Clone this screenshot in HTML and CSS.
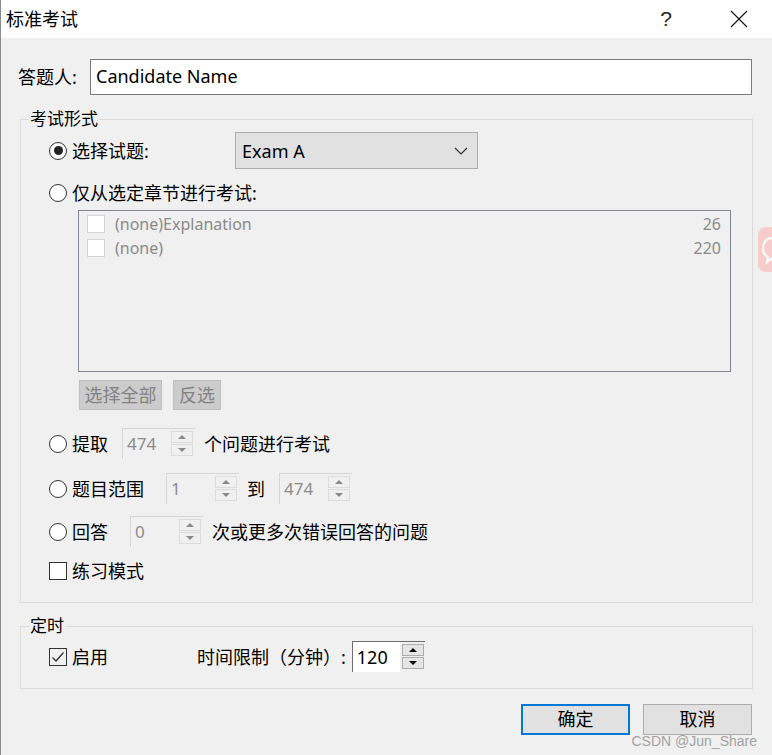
FILE: index.html
```html
<!DOCTYPE html>
<html lang="zh-CN">
<head>
<meta charset="utf-8">
<title>标准考试</title>
<link rel="stylesheet" href="styles.css">
</head>
<body>
<div class="window">
  <div class="titlebar">
    <span class="title">标准考试</span>
    <span class="tb-help">?</span>
    <span class="tb-close">
      <svg width="18" height="18" viewBox="0 0 18 18"><path d="M1 1 L17 17 M17 1 L1 17" stroke="#111" stroke-width="1.1" fill="none"/></svg>
    </span>
  </div>

  <div class="content">
    <div class="name-row">
      <span class="name-label">答题人:</span>
      <div class="textbox">Candidate Name</div>
    </div>

    <fieldset class="group g1">
      <legend>考试形式</legend>
      <div class="g-body">
        <div class="row r1">
          <span class="radio checked"></span>
          <span class="lbl w-select">选择试题:</span>
          <div class="combo">
            <span>Exam A</span>
            <svg class="chev" width="14" height="8" viewBox="0 0 14 8"><path d="M1 1 L7 7 L13 1" stroke="#333" stroke-width="1.2" fill="none"/></svg>
          </div>
        </div>

        <div class="row r2">
          <span class="radio"></span>
          <span class="lbl">仅从选定章节进行考试:</span>
        </div>

        <div class="list">
          <div class="list-item">
            <span class="lcheck"></span>
            <span class="ltext">(none)Explanation</span>
            <span class="lcount">26</span>
          </div>
          <div class="list-item">
            <span class="lcheck"></span>
            <span class="ltext">(none)</span>
            <span class="lcount">220</span>
          </div>
        </div>

        <div class="list-btns">
          <span class="dbtn w-all">选择全部</span>
          <span class="dbtn w-inv">反选</span>
        </div>

        <div class="row r-take">
          <span class="radio"></span>
          <span class="lbl w-take">提取</span>
          <div class="spin disabled">
            <span class="spin-field">474</span>
            <span class="spin-btns"><span class="sb"><i class="up"></i></span><span class="sb"><i class="dn"></i></span></span>
          </div>
          <span class="after">个问题进行考试</span>
        </div>

        <div class="row r-range">
          <span class="radio"></span>
          <span class="lbl w-range">题目范围</span>
          <div class="spin disabled">
            <span class="spin-field">1</span>
            <span class="spin-btns"><span class="sb"><i class="up"></i></span><span class="sb"><i class="dn"></i></span></span>
          </div>
          <span class="to">到</span>
          <div class="spin disabled">
            <span class="spin-field">474</span>
            <span class="spin-btns"><span class="sb"><i class="up"></i></span><span class="sb"><i class="dn"></i></span></span>
          </div>
        </div>

        <div class="row r-ans">
          <span class="radio"></span>
          <span class="lbl w-ans">回答</span>
          <div class="spin disabled">
            <span class="spin-field">0</span>
            <span class="spin-btns"><span class="sb"><i class="up"></i></span><span class="sb"><i class="dn"></i></span></span>
          </div>
          <span class="after">次或更多次错误回答的问题</span>
        </div>

        <div class="row r-practice">
          <span class="check"></span>
          <span class="lbl">练习模式</span>
        </div>
      </div>
    </fieldset>

    <fieldset class="group g2">
      <legend>定时</legend>
      <div class="g-body">
        <div class="row r-timer">
          <span class="check checked">
            <svg width="16" height="16" viewBox="0 0 16 16"><path d="M2.5 8.5 L6 12 L13.5 3.5" stroke="#333" stroke-width="1.3" fill="none"/></svg>
          </span>
          <span class="lbl w-enable">启用</span>
          <span class="lbl lbl-limit">时间限制（分钟）:</span>
          <div class="spin enabled">
            <span class="spin-field">120</span>
            <span class="spin-btns"><span class="sb"><i class="up"></i></span><span class="sb"><i class="dn"></i></span></span>
          </div>
        </div>
      </div>
    </fieldset>

    <div class="footer">
      <span class="btn default">确定</span>
      <span class="btn">取消</span>
    </div>
  </div>

  <div class="side-widget">
    <svg width="14" height="45" viewBox="0 0 14 45"><path d="M14 11 C8 11 5 16 5 21 C5 26 8 29 10 30 L9 35 L14 31" stroke="#fff" stroke-width="2" fill="none"/></svg>
  </div>
  <div class="watermark">CSDN @Jun_Share</div>
</div>
</body>
</html>
```

FILE: styles.css
```css
* { box-sizing: border-box; }
html, body { margin: 0; padding: 0; }
body {
  width: 772px;
  height: 755px;
  overflow: hidden;
  background: #f0f0f0;
  font-family: "Noto Sans", "Noto Sans CJK SC", sans-serif;
  font-size: 18px;
  color: #000;
}

.window {
  position: relative;
  width: 772px;
  height: 755px;
  border-left: 1px solid #8a8a8a;
  background: #f0f0f0;
  display: flex;
  flex-direction: column;
}

/* title bar */
.titlebar {
  flex: none;
  height: 38px;
  background: #fff;
  display: flex;
  align-items: center;
  padding-left: 5px;
}
.title { flex: 1; font-size: 18px; line-height: 24px; }
.tb-help {
  width: 46px;
  text-align: center;
  font-family: "Liberation Sans", sans-serif;
  font-size: 21px;
  line-height: 24px;
  color: #222;
  margin-right: 17px;
}
.tb-close {
  width: 66px;
  display: flex;
  justify-content: center;
  align-items: center;
}

/* content */
.content {
  flex: 1;
  display: flex;
  flex-direction: column;
  padding: 0 19px 0 17px;
}

.name-row {
  margin-top: 21px;
  height: 36px;
  display: flex;
  align-items: center;
}
.name-label { width: 72px; line-height: 24px; }
.textbox {
  flex: 1;
  height: 36px;
  margin-right: 1px;
  background: #fff;
  border: 1px solid #7a7a7a;
  padding-left: 5px;
  line-height: 33px;
  font-size: 18px;
}

/* group boxes */
.group {
  margin: 14px 0 0 2px;
  border: 1px solid #dcdcdc;
  padding: 0 21px 19px 8px;
  min-width: 0;
}
.group legend {
  padding: 0 1px;
  line-height: 20px;
  height: 20px;
  font-size: 17px;
}
.g2 { margin-top: 13px; padding-bottom: 16px; }
.g-body { padding-left: 20px; display: flex; flex-direction: column; }

.row { display: flex; align-items: center; }
.lbl { line-height: 24px; margin-left: 5px; white-space: nowrap; }
.after { line-height: 24px; margin-left: 9px; white-space: nowrap; }
.to { line-height: 24px; margin: 0 14px 0 8px; }
.lbl-limit { margin-right: 6px; }

.r1 { margin-top: 3px; height: 37px; }
.r2 { margin-top: 12px; height: 24px; }
.r-take { margin-top: 18px; height: 31px; }
.r-range { margin-top: 14px; height: 31px; }
.r-ans { margin-top: 12px; height: 31px; }
.r-practice { margin-top: 12px; height: 24px; }
.r-timer { margin-top: 5px; height: 31px; }

.w-select { width: 163px; }
.w-take { width: 50px; }
.w-range { width: 94px; }
.w-ans { width: 58px; }
.w-enable { width: 120px; }

/* radio & checkbox */
.radio {
  flex: none;
  width: 18px;
  height: 18px;
  border-radius: 50%;
  border: 1.5px solid #333;
  background: #fff;
  display: flex;
  align-items: center;
  justify-content: center;
}
.radio.checked::after {
  content: "";
  width: 9px;
  height: 9px;
  border-radius: 50%;
  background: #222;
}
.check {
  flex: none;
  width: 18px;
  height: 18px;
  border: 1.5px solid #333;
  background: #fff;
  display: flex;
  align-items: center;
  justify-content: center;
}
.check.checked { background: #f0f0f0; }

/* combo */
.combo {
  width: 243px;
  height: 37px;
  background: #e1e1e1;
  border: 1px solid #adadad;
  display: flex;
  align-items: center;
  justify-content: space-between;
  padding: 0 9px 0 6px;
  font-size: 18px;
}

/* list */
.list {
  margin: 5px 0 0 29px;
  height: 162px;
  border: 1px solid #828790;
  background: #f0f0f0;
  padding: 1px 9px 0 8px;
}
.list-item {
  height: 24px;
  display: flex;
  align-items: center;
  color: #8a8a8a;
  font-size: 16px;
}
.lcheck {
  width: 18px;
  height: 18px;
  background: #fff;
  border: 1px solid #d4d4d4;
  margin-right: 10px;
}
.ltext { flex: 1; line-height: 20px; }
.lcount { line-height: 20px; }

.list-btns {
  margin: 8px 0 0 30px;
  height: 30px;
  display: flex;
  gap: 11px;
}
.dbtn {
  height: 30px;
  background: #cccccc;
  border: 1px solid #bfbfbf;
  color: #838383;
  line-height: 28px;
  text-align: center;
  font-size: 18px;
}
.w-all { width: 83px; }
.w-inv { width: 48px; }

/* spinner */
.spin {
  flex: none;
  width: 73px;
  height: 31px;
  display: flex;
  border-top: 1px solid #d6d6d6;
  border-left: 1px solid #d6d6d6;
}
.spin-field {
  flex: 1;
  padding-left: 4px;
  line-height: 30px;
  font-size: 17px;
  color: #8c8c8c;
}
.spin-btns {
  width: 22px;
  margin-right: 2px;
  display: flex;
  flex-direction: column;
  justify-content: center;
  gap: 1px;
  padding: 2px 0 3px;
}
.sb {
  flex: 1;
  border: 1px solid #dcdcdc;
  display: flex;
  align-items: center;
  justify-content: center;
}
.sb i { width: 0; height: 0; border-left: 4px solid transparent; border-right: 4px solid transparent; }
.sb i.up { border-bottom: 4px solid #8a8a8a; }
.sb i.dn { border-top: 4px solid #8a8a8a; }

.spin.enabled {
  border-top: 1px solid #6e6e6e;
  border-left: 1px solid #6e6e6e;
}
.spin.enabled .spin-field { background: #fff; color: #000; font-size: 18px; }
.spin.enabled .spin-btns { margin-left: 2px; margin-right: 1px; }
.spin.enabled .sb { border-color: #adadad; background: #e5e5e5; }
.spin.enabled .sb i.up { border-bottom-color: #000; }
.spin.enabled .sb i.dn { border-top-color: #000; }

/* footer */
.footer {
  margin-top: 15px;
  height: 31px;
  display: flex;
  justify-content: flex-end;
  gap: 13px;
  padding-right: 1px;
}
.btn {
  width: 109px;
  height: 31px;
  background: #e1e1e1;
  border: 1px solid #adadad;
  text-align: center;
  line-height: 29px;
  font-size: 18px;
}
.btn.default { border: 2px solid #0078d7; line-height: 27px; }

/* overlays */
.side-widget {
  position: absolute;
  right: 0;
  top: 227px;
  width: 14px;
  height: 45px;
  background: #f6cdca;
  border-radius: 8px 0 0 8px;
}
.side-widget svg { display: block; }
.watermark {
  position: absolute;
  right: 15px;
  bottom: 6px;
  font-family: "Liberation Sans", sans-serif;
  font-size: 14px;
  line-height: 16px;
  color: #a3a3a3;
}
```
